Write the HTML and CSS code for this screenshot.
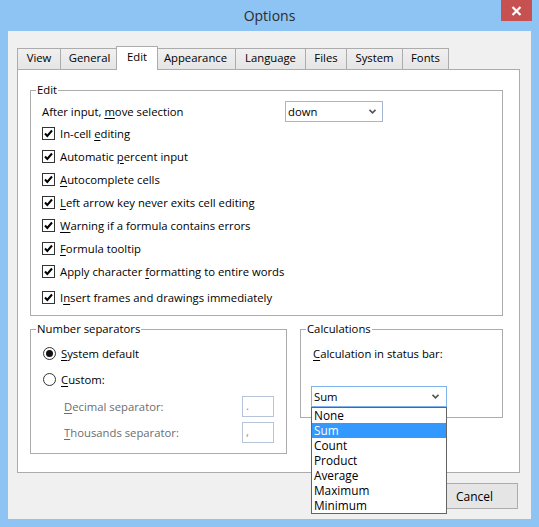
FILE: index.html
```html
<!DOCTYPE html>
<html>
<head>
<meta charset="utf-8">
<link rel="stylesheet" href="styles.css">
</head>
<body>
<div class="window">
  <div class="titlebar">
    <span class="title">Options</span>
    <div class="close">
      <svg width="11" height="10" viewBox="0 0 11 10"><path d="M1.5 1 L9.5 9 M9.5 1 L1.5 9" stroke="#fff" stroke-width="2.2" fill="none"/></svg>
    </div>
  </div>
  <div class="client">
    <div class="tabs">
      <div class="tab w-view">View</div>
      <div class="tab w-general">General</div>
      <div class="tab w-edit selected">Edit</div>
      <div class="tab w-appearance">Appearance</div>
      <div class="tab w-language">Language</div>
      <div class="tab w-files">Files</div>
      <div class="tab w-system">System</div>
      <div class="tab w-fonts">Fonts</div>
    </div>
    <div class="panel">
      <div class="group group-edit">
        <div class="group-title">Edit</div>
        <div class="row-select">
          <span class="select-label">After input, <u>m</u>ove selection</span>
          <div class="combo combo-down">
            <span>down</span>
            <svg class="chev" width="7" height="5" viewBox="0 0 7 5"><path d="M0.5 0.8 L3.5 3.8 L6.5 0.8" stroke="#555" stroke-width="1.6" fill="none"/></svg>
          </div>
        </div>
        <div class="check-row"><span class="cb"><svg width="11" height="11" viewBox="0 0 11 11"><path d="M2 5.5 L4.3 8 L9 2.5" stroke="#000" stroke-width="2" fill="none"/></svg></span><span>In-cell <u>e</u>diting</span></div>
        <div class="check-row"><span class="cb"><svg width="11" height="11" viewBox="0 0 11 11"><path d="M2 5.5 L4.3 8 L9 2.5" stroke="#000" stroke-width="2" fill="none"/></svg></span><span>Automatic <u>p</u>ercent input</span></div>
        <div class="check-row"><span class="cb"><svg width="11" height="11" viewBox="0 0 11 11"><path d="M2 5.5 L4.3 8 L9 2.5" stroke="#000" stroke-width="2" fill="none"/></svg></span><span><u>A</u>utocomplete cells</span></div>
        <div class="check-row"><span class="cb"><svg width="11" height="11" viewBox="0 0 11 11"><path d="M2 5.5 L4.3 8 L9 2.5" stroke="#000" stroke-width="2" fill="none"/></svg></span><span><u>L</u>eft arrow key never exits cell editing</span></div>
        <div class="check-row"><span class="cb"><svg width="11" height="11" viewBox="0 0 11 11"><path d="M2 5.5 L4.3 8 L9 2.5" stroke="#000" stroke-width="2" fill="none"/></svg></span><span><u>W</u>arning if a formula contains errors</span></div>
        <div class="check-row"><span class="cb"><svg width="11" height="11" viewBox="0 0 11 11"><path d="M2 5.5 L4.3 8 L9 2.5" stroke="#000" stroke-width="2" fill="none"/></svg></span><span><u>F</u>ormula tooltip</span></div>
        <div class="check-row"><span class="cb"><svg width="11" height="11" viewBox="0 0 11 11"><path d="M2 5.5 L4.3 8 L9 2.5" stroke="#000" stroke-width="2" fill="none"/></svg></span><span>Apply character <u>f</u>ormatting to entire words</span></div>
        <div class="check-row last"><span class="cb"><svg width="11" height="11" viewBox="0 0 11 11"><path d="M2 5.5 L4.3 8 L9 2.5" stroke="#000" stroke-width="2" fill="none"/></svg></span><span>I<u>n</u>sert frames and drawings immediately</span></div>
      </div>
      <div class="bottom-groups">
        <div class="group group-num">
          <div class="group-title">Number separators</div>
          <div class="radio-row first">
            <svg class="radio" width="13" height="13" viewBox="0 0 13 13"><circle cx="6.5" cy="6.5" r="6" fill="#fff" stroke="#333" stroke-width="1"/><circle cx="6.5" cy="6.5" r="3.5" fill="#111"/></svg>
            <span><u>S</u>ystem default</span>
          </div>
          <div class="radio-row">
            <svg class="radio" width="13" height="13" viewBox="0 0 13 13"><circle cx="6.5" cy="6.5" r="6" fill="#fff" stroke="#333" stroke-width="1"/></svg>
            <span><u>C</u>ustom:</span>
          </div>
          <div class="sep-row first">
            <span class="sep-label"><u>D</u>ecimal separator:</span>
            <span class="sep-input">.</span>
          </div>
          <div class="sep-row">
            <span class="sep-label"><u>T</u>housands separator:</span>
            <span class="sep-input">,</span>
          </div>
        </div>
        <div class="group group-calc">
          <div class="group-title">Calculations</div>
          <div class="calc-label"><u>C</u>alculation in status bar:</div>
          <div class="combo combo-sum">
            <span>Sum</span>
            <svg class="chev" width="7" height="5" viewBox="0 0 7 5"><path d="M0.5 0.8 L3.5 3.8 L6.5 0.8" stroke="#555" stroke-width="1.6" fill="none"/></svg>
            <ul class="dropdown">
              <li>None</li>
              <li class="hl">Sum</li>
              <li>Count</li>
              <li>Product</li>
              <li>Average</li>
              <li>Maximum</li>
              <li>Minimum</li>
            </ul>
          </div>
        </div>
      </div>
    </div>
    <div class="buttons">
      <div class="btn">Cancel</div>
    </div>
  </div>
</div>
</body>
</html>
```
FILE: styles.css
```css
* { box-sizing: border-box; }
html, body { margin: 0; padding: 0; }
body {
  width: 539px;
  height: 527px;
  overflow: hidden;
  background: #8dc4f4;
  font-family: "Open Sans", "Noto Sans", sans-serif;
  font-size: 11.3px;
  color: #000;
}
u { text-decoration: underline; text-underline-offset: 2px; }
.window { width: 539px; height: 527px; position: relative; }
.titlebar {
  height: 31px;
  position: relative;
  display: flex;
  justify-content: center;
  align-items: center;
}
.title {
  font-size: 14px;
  color: #2b2b2b;
  margin-top: -1px;
}
.close {
  position: absolute;
  left: 501px;
  top: 0;
  width: 31px;
  height: 21px;
  background: #c75050;
  display: flex;
  align-items: center;
  justify-content: center;
}
.client {
  margin-left: 8px;
  width: 523px;
  height: 488px;
  background: #f0f0f0;
  padding: 15px 11px 0 9px;
}
.tabs {
  display: flex;
  align-items: flex-end;
  height: 23px;
  position: relative;
  z-index: 2;
}
.tab {
  height: 21px;
  border: 1px solid #acacac;
  border-bottom: none;
  background: linear-gradient(#f0f0f0, #e5e5e5);
  margin-left: -1px;
  text-align: center;
  line-height: 18px;
}
.tab:first-child { margin-left: 0; }
.tab.selected {
  height: 24px;
  margin-bottom: -1px;
  background: #fff;
  margin-left: -3px;
  margin-right: -2px;
  line-height: 20px;
  position: relative;
  z-index: 3;
}
.w-view { width: 44px; }
.w-general { width: 59px; }
.w-edit { width: 42px; }
.w-appearance { width: 81px; }
.w-language { width: 71px; }
.w-files { width: 42px; }
.w-system { width: 57px; }
.w-fonts { width: 47px; }
.panel {
  width: 503px;
  height: 404px;
  background: #fff;
  border: 1px solid #acacac;
  padding: 20px 16px 0 12px;
  position: relative;
  z-index: 1;
}
.group {
  border: 1px solid #acacac;
}
.group-title {
  display: table;
  line-height: 16px;
  margin-top: -9px;
  margin-left: -6px;
  padding: 0 1px;
  background: #fff;
}
.group-edit {
  width: 473px;
  height: 226px;
  padding: 0 11px;
}
.row-select {
  display: flex;
  align-items: center;
  height: 21px;
  margin-top: 3px;
}
.select-label { width: 243px; }
.combo {
  position: relative;
  height: 21px;
  border: 1px solid #a6b5d3;
  background: #fff;
  display: flex;
  align-items: center;
  justify-content: space-between;
  padding: 0 6px 0 2px;
}
.combo-down { width: 98px; }
.check-row {
  height: 23px;
  display: flex;
  align-items: center;
}
.check-row.last { margin-top: 3px; }
.cb {
  width: 13px;
  height: 13px;
  border: 1px solid #333;
  background: #fff;
  display: flex;
  align-items: center;
  justify-content: center;
  margin-right: 5px;
}
.bottom-groups {
  display: flex;
  align-items: flex-start;
  gap: 13px;
  margin-top: 13px;
}
.group-num {
  width: 257px;
  height: 125px;
  padding: 0 11px;
}
.radio-row {
  height: 20px;
  display: flex;
  align-items: center;
  margin-top: 6px;
}
.radio { margin-left: 1px; margin-right: 5px; flex: none; }
.sep-row {
  height: 21px;
  display: flex;
  align-items: center;
  margin-top: 5px;
  color: #6d6d6d;
}
.sep-row.first { margin-top: 7px; }
.sep-label { width: 178px; margin-left: 22px; }
.sep-input {
  width: 32px;
  height: 21px;
  border: 1px solid #b6c3d8;
  padding-left: 3px;
  line-height: 18px;
  color: #8a8a8a;
}
.group-calc {
  width: 203px;
  height: 89px;
  padding: 0 11px;
}
.calc-label {
  line-height: 16px;
  margin-top: 9px;
  margin-left: 1px;
}
.combo-sum {
  width: 136px;
  margin-top: 24px;
  margin-left: -1px;
  border-color: #7eb4ea;
  padding-right: 7px;
}
.dropdown {
  position: absolute;
  left: -1px;
  top: 20px;
  width: 136px;
  margin: 0;
  padding: 0;
  list-style: none;
  border: 1px solid #646464;
  background: #fff;
  z-index: 10;
}
.dropdown li {
  height: 15px;
  line-height: 15px;
  padding-left: 2px;
  font-size: 11.8px;
}
.dropdown li.hl { background: #3399ff; color: #fff; }
.buttons {
  display: flex;
  justify-content: flex-end;
  margin-top: 10px;
  margin-right: 2px;
}
.btn {
  width: 87px;
  height: 26px;
  border: 1px solid #acacac;
  background: #e5e5e5;
  display: flex;
  align-items: center;
  justify-content: center;
  font-size: 12px;
}
```
